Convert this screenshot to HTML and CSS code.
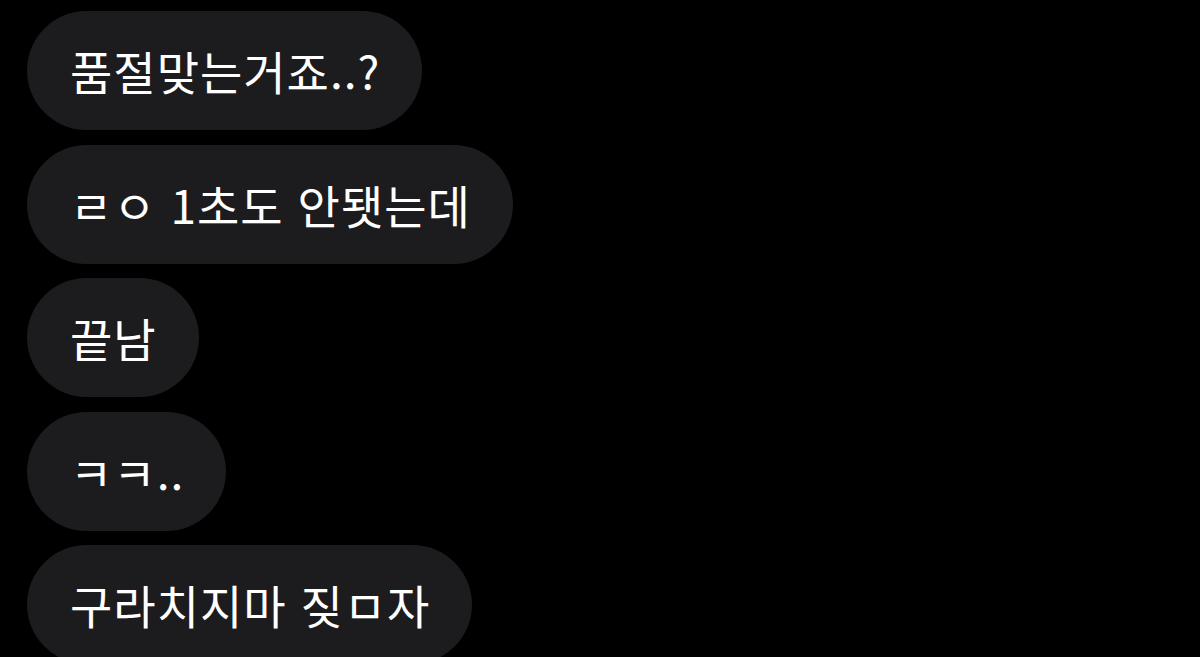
FILE: index.html
```html
<!DOCTYPE html>
<html lang="ko">
<head>
<meta charset="utf-8">
<link rel="stylesheet" href="styles.css">
</head>
<body>
<main class="chat">
  <div class="bubble">품절맞는거죠..?</div>
  <div class="bubble">ㄹㅇ 1초도 안됏는데</div>
  <div class="bubble">끝남</div>
  <div class="bubble">ㅋㅋ..</div>
  <div class="bubble">구라치지마 짖ㅁ자</div>
</main>
</body>
</html>
```
FILE: styles.css
```css
html, body {
  margin: 0;
  padding: 0;
  background: #000;
  height: 100%;
  overflow: hidden;
}
.chat {
  display: flex;
  flex-direction: column;
  align-items: flex-start;
  gap: 14.5px;
  padding: 11px 0 0 27px;
}
.bubble {
  background: #1c1c1e;
  color: #fff;
  font-family: "Noto Sans CJK KR", "Noto Sans", sans-serif;
  font-size: 46px;
  font-weight: 400;
  letter-spacing: 1px;
  line-height: 59px;
  padding: 30px 42px 30px 43px;
  border-radius: 60px;
  white-space: nowrap;
}
```
